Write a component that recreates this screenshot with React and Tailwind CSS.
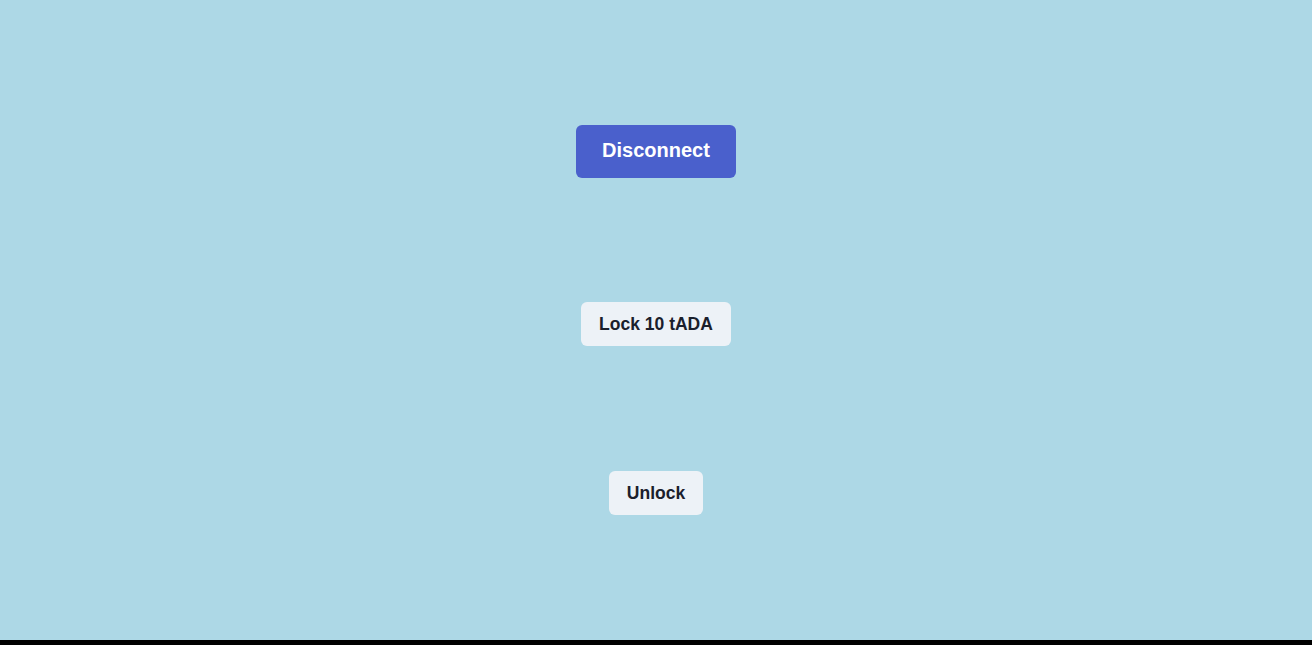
import React from 'react';

export default function App() {
    return (
        <div className="min-h-screen bg-black" style={{ fontFamily: '"Liberation Sans", Arial, sans-serif' }}>
            <div className="h-[640px] bg-[#add8e6] flex flex-col items-center pt-[125px]">
                <button className="h-[53px] px-[26px] pb-[3px] rounded-md bg-[#4a60cc] text-white text-[20px] font-bold">
                    Disconnect
                </button>
                <button className="mt-[124px] h-[44px] px-[18px] pt-[1px] rounded-md bg-[#edf2f7] text-[#1a202c] text-[17.5px] font-bold">
                    Lock 10 tADA
                </button>
                <button className="mt-[125px] h-[44px] px-[18px] pt-[1px] rounded-md bg-[#edf2f7] text-[#1a202c] text-[17.5px] font-bold">
                    Unlock
                </button>
            </div>
        </div>
    );
}
